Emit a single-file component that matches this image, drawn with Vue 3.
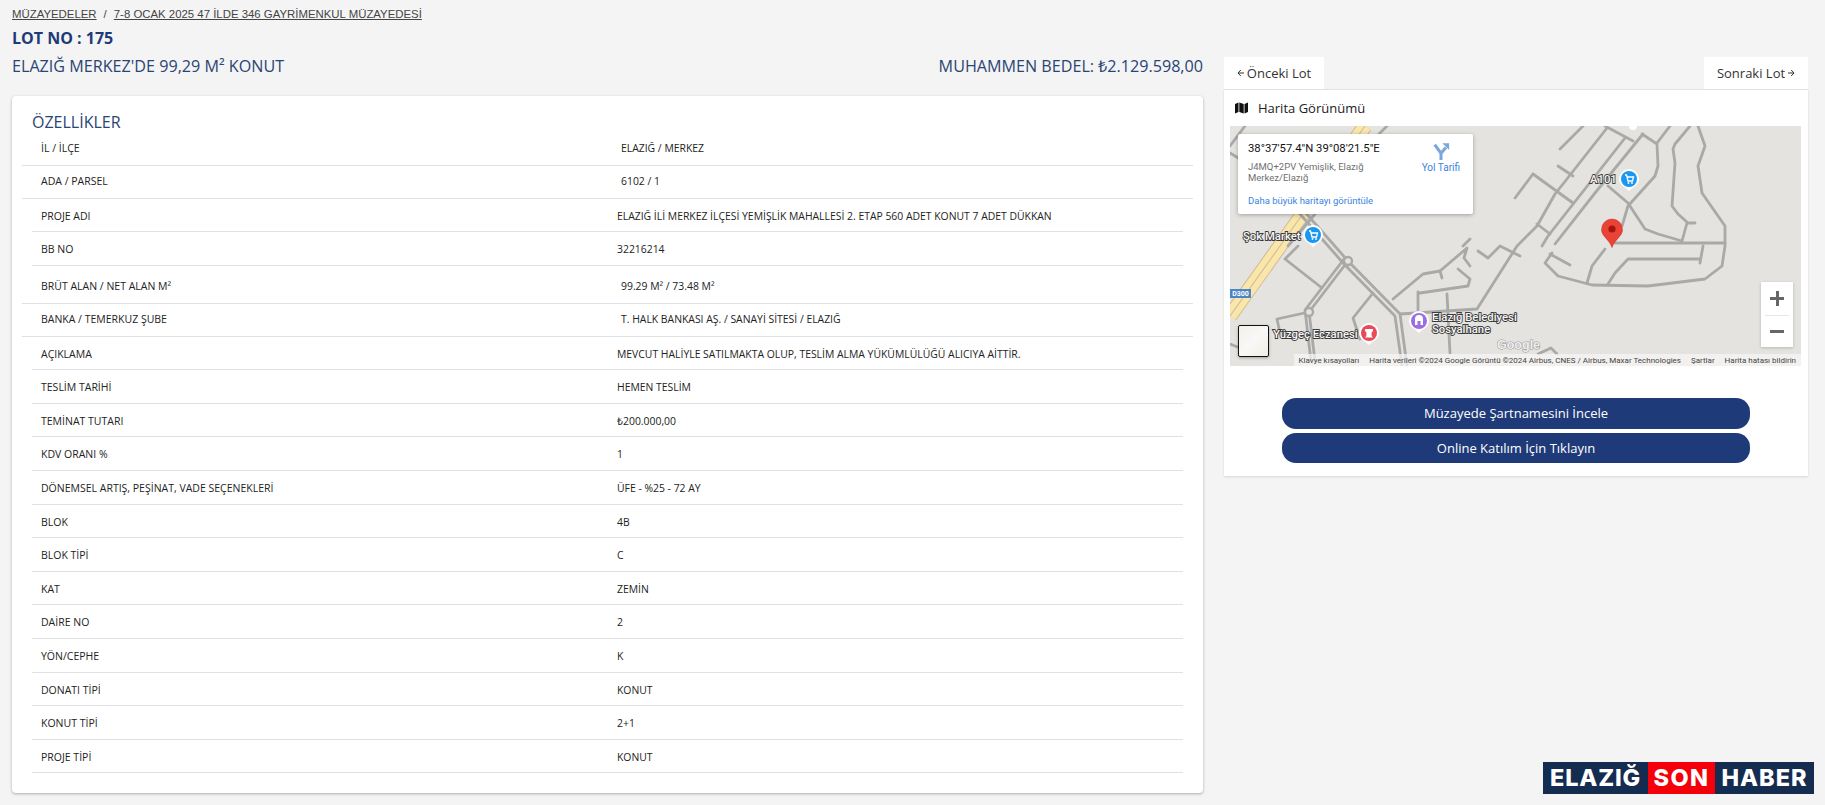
<script setup>
const rows = [
  { k: 'İL / İLÇE', v: 'ELAZIĞ / MERKEZ', h: 33, wide: true },
  { k: 'ADA / PARSEL', v: '6102 / 1', h: 33, wide: true },
  { k: 'PROJE ADI', v: 'ELAZIĞ İLİ MERKEZ İLÇESİ YEMİŞLİK MAHALLESİ 2. ETAP 560 ADET KONUT 7 ADET DÜKKAN', h: 33 },
  { k: 'BB NO', v: '32216214', h: 34 },
  { k: 'BRÜT ALAN / NET ALAN M²', v: '99.29 M² / 73.48 M²', h: 38, wide: true, low: true },
  { k: 'BANKA / TEMERKUZ ŞUBE', v: 'T. HALK BANKASI AŞ. / SANAYİ SİTESİ / ELAZIĞ', h: 33, wide: true },
  { k: 'AÇIKLAMA', v: 'MEVCUT HALİYLE SATILMAKTA OLUP, TESLİM ALMA YÜKÜMLÜLÜĞÜ ALICIYA AİTTİR.', h: 33 },
  { k: 'TESLİM TARİHİ', v: 'HEMEN TESLİM', h: 34 },
  { k: 'TEMİNAT TUTARI', v: '₺200.000,00', h: 33 },
  { k: 'KDV ORANI %', v: '1', h: 34 },
  { k: 'DÖNEMSEL ARTIŞ, PEŞİNAT, VADE SEÇENEKLERİ', v: 'ÜFE - %25 - 72 AY', h: 34 },
  { k: 'BLOK', v: '4B', h: 33 },
  { k: 'BLOK TİPİ', v: 'C', h: 34 },
  { k: 'KAT', v: 'ZEMİN', h: 33 },
  { k: 'DAİRE NO', v: '2', h: 34 },
  { k: 'YÖN/CEPHE', v: 'K', h: 34 },
  { k: 'DONATI TİPİ', v: 'KONUT', h: 33 },
  { k: 'KONUT TİPİ', v: '2+1', h: 34 },
  { k: 'PROJE TİPİ', v: 'KONUT', h: 33 }
]

const roads = [
  '15,0 0,20', '0,27 10,33', '147,10 157,0', '240,113 233,120',
  '330,23 353,0', '377,2 333,58 325,68 307,100 287,120 247,183 170,188',
  '395,12 318,110 312,120', '413,8 365,67 325,118', '328,40 343,50', '303,48 343,77', '303,48 285,72',
  '307,98 320,108', '375,0 403,15', '412,8 427,18 428,40 425,50 398,80 392,100', '440,0 427,17',
  '460,0 445,18 443,23 445,37 442,80 448,88 458,97 465,97',
  '468,0 475,20 468,40 472,67 495,100 495,120 492,140 475,153 418,160 362,159 328,150 315,137 322,127',
  '378,60 398,77 415,103 428,108 452,115', '385,117 495,117', '457,97 452,115',
  '375,123 362,140 357,157', '470,133 398,133 385,147 378,158', '473,120 470,137', '320,128 340,139',
  '74,85 118,135 170,188 177,240', '70,88 114,138 165,190 172,240',
  '118,135 79,186 85,235', '114,133 75,184 81,235',
  '68,120 55,133 92,162', '79,186 47,193 50,207', '0,218 10,222',
  '143,167 123,192 130,213', '163,173 193,148 210,145 212,152', '210,145 237,122 234,132 240,140',
  '228,143 240,153 238,160 190,167', '188,166 188,185', '217,168 220,227',
  '248,125 258,132 270,120 290,130', '308,228 321,222 327,228', '85,88 58,120'
]
</script>

<template>
  <div class="page">
    <div class="left">
      <div class="crumbs">
        <a class="crumb">MÜZAYEDELER</a>
        <span class="sep">/</span>
        <a class="crumb">7-8 OCAK 2025 47 İLDE 346 GAYRİMENKUL MÜZAYEDESİ</a>
      </div>
      <div class="lot">LOT NO : 175</div>
      <div class="titlebar">
        <span>ELAZIĞ MERKEZ'DE 99,29 M² KONUT</span>
        <span>MUHAMMEN BEDEL: ₺2.129.598,00</span>
      </div>
      <section class="card">
        <h2 class="card-title">ÖZELLİKLER</h2>
        <div
          v-for="r in rows"
          :key="r.k"
          class="row"
          :class="{ wide: r.wide, low: r.low }"
          :style="{ height: r.h + 'px' }"
        >
          <span class="row-key">{{ r.k }}</span>
          <span>{{ r.v }}</span>
        </div>
      </section>
    </div>

    <aside class="right">
      <div class="nav">
        <a class="nav-btn">
          <svg class="arrow" viewBox="0 0 7 8" aria-hidden="true"><path d="M7 4H1M3.800 1 1 4l2.800 3" /></svg>
          <span>Önceki Lot</span>
        </a>
        <a class="nav-btn next">
          <span>Sonraki Lot</span>
          <svg class="arrow" viewBox="0 0 7 8" aria-hidden="true"><path d="M0 4h6M3.200 1 6 4 3.200 7" /></svg>
        </a>
      </div>
      <div class="side-card">
        <div class="map-head">
          <svg class="map-icon" viewBox="0 0 13 12" aria-hidden="true">
            <path fill="#111" d="M0 2 3.500.5V10L0 11.500zM4.300.5 8.700 2v9.500L4.300 10zM9.500 2 13 .5V10l-3.500 1.500z" />
          </svg>
          <span>Harita Görünümü</span>
        </div>
        <div class="map">
          <svg class="map-svg" viewBox="0 0 571 240" width="571" height="240">
            <rect width="571" height="240" fill="#e5e3df" />
            <g fill="none" stroke-linejoin="round">
              <polyline points="135,0 50,120 0,190" stroke="#cbbd92" stroke-width="15" />
              <polyline points="135,0 50,120 0,190" stroke="#fae6ab" stroke-width="13" />
              <polyline points="135,0 50,120 0,190" stroke="#cfc298" stroke-width="1.2" />
              <polyline v-for="p in roads" :key="p" :points="p" stroke="#a9a9a7" stroke-width="2.8" stroke-linecap="round" />
            </g>
            <circle cx="118" cy="135" r="4" fill="#e5e3df" stroke="#a9a9a7" stroke-width="2.4" />
            <circle cx="79" cy="186" r="4" fill="#e5e3df" stroke="#a9a9a7" stroke-width="2.4" />
            <circle cx="403" cy="0" r="4" fill="#fff" />

            <rect x="0" y="163" width="21" height="9" fill="#4a86c8" />
            <text x="10.5" y="170" class="shield">D300</text>

            <text x="13" y="114" class="label">Şok Market</text>
            <text x="360" y="57" class="label">A101</text>
            <text x="43" y="212" class="label">Yüzgeç Eczanesi</text>
            <text x="202" y="195" class="label">Elazığ Belediyesi</text>
            <text x="202" y="207" class="label">Sosyalhane</text>
            <text x="267" y="223" class="google">Google</text>

            <g>
              <path fill="#fff" d="M83 99a10 10 0 0 1 10 10c0 6-6 8-10 12-4-4-10-6-10-12a10 10 0 0 1 10-10z" />
              <circle cx="83" cy="109" r="8" fill="#1a98f0" />
              <path fill="none" stroke="#fff" stroke-width="1.3" d="M79 105h1.500l1.500 6h4.500l1-4h-6" />
              <circle cx="82.500" cy="113" r=".9" fill="#fff" />
              <circle cx="86" cy="113" r=".9" fill="#fff" />
            </g>
            <g>
              <path fill="#fff" d="M399 43a10 10 0 0 1 10 10c0 6-6 8-10 12-4-4-10-6-10-12a10 10 0 0 1 10-10z" />
              <circle cx="399" cy="53" r="8" fill="#1a98f0" />
              <path fill="none" stroke="#fff" stroke-width="1.3" d="M395 49h1.500l1.500 6h4.500l1-4h-6" />
              <circle cx="398.500" cy="57" r=".9" fill="#fff" />
              <circle cx="402" cy="57" r=".9" fill="#fff" />
            </g>
            <g>
              <path fill="#fff" d="M139 197a10 10 0 0 1 10 10c0 6-6 8-10 12-4-4-10-6-10-12a10 10 0 0 1 10-10z" />
              <circle cx="139" cy="207" r="8" fill="#e84a5a" />
              <path fill="#fff" d="M135 203h8v2l-1.400 1.500v3.500l1.400 1.500h-8l1.400-1.500v-3.500L135 205z" />
            </g>
            <g>
              <path fill="#fff" d="M189 185a10 10 0 0 1 10 10c0 6-6 8-10 12-4-4-10-6-10-12a10 10 0 0 1 10-10z" />
              <circle cx="189" cy="195" r="8" fill="#9b6fe0" />
              <path fill="#fff" fill-rule="evenodd" d="M185 199v-6a4 4 0 0 1 8 0v6zM187.500 199h3v-4h-3z" />
            </g>

            <path fill="#ea4335" stroke="#c5281c" stroke-width=".5" d="M382 93a10.500 10.500 0 0 1 10.500 10.500c0 7-7.500 9.500-10.500 18-3-8.500-10.500-11-10.500-18A10.500 10.500 0 0 1 382 93z" />
            <circle cx="382" cy="103" r="3.600" fill="#a3150f" />
          </svg>

          <div class="info">
            <div class="info-main">
              <div class="coords">38°37'57.4"N 39°08'21.5"E</div>
              <div class="address">J4MQ+2PV Yemişlik, Elazığ Merkez/Elazığ</div>
              <a class="bigger">Daha büyük haritayı görüntüle</a>
            </div>
            <a class="dir">
              <svg class="dir-icon" viewBox="0 0 20 20" aria-hidden="true">
                <path fill="none" stroke="#7ba6dc" stroke-width="3.400" d="M10 20v-7.500L3 3M10 12.500 15.500 6" />
                <path fill="#7ba6dc" d="M11.500 1.500H19V9z" />
              </svg>
              <span>Yol Tarifi</span>
            </a>
          </div>

          <div class="layer"></div>

          <div class="zoom">
            <div class="zoom-btn"><span class="plus-h"></span><span class="plus-v"></span></div>
            <div class="zoom-btn"><span class="plus-h"></span></div>
          </div>

          <div class="attr">
            <span>Klavye kısayolları</span>
            <span>Harita verileri ©2024 Google Görüntü ©2024 Airbus, CNES / Airbus, Maxar Technologies</span>
            <span>Şartlar</span>
            <span>Harita hatası bildirin</span>
          </div>
        </div>
        <div class="actions">
          <a class="action">Müzayede Şartnamesini İncele</a>
          <a class="action second">Online Katılım İçin Tıklayın</a>
        </div>
      </div>
    </aside>

    <div class="logo">
      <span class="logo-a">ELAZIĞ</span>
      <span class="logo-b">SON</span>
      <span class="logo-c">HABER</span>
    </div>
  </div>
</template>

<style>
html, body { margin: 0; background: #f4f4f4; }
</style>

<style scoped>
.page {
  position: relative;
  display: flex;
  gap: 21px;
  width: 1825px;
  height: 805px;
  overflow: hidden;
  background: #f4f4f4;
  padding-left: 12px;
  box-sizing: border-box;
  font-family: "Open Sans", sans-serif;
}
.left { width: 1191px; flex: none; }
.crumbs {
  height: 28px;
  display: flex;
  align-items: center;
  gap: 7px;
  font: 11.400px "Liberation Sans", sans-serif;
  color: #444;
}
.crumb { text-decoration: underline; }
.lot {
  height: 20px;
  line-height: 20px;
  font-size: 16px;
  font-weight: 700;
  color: #1f3a78;
}
.titlebar {
  margin-top: 4px;
  height: 28px;
  display: flex;
  align-items: center;
  justify-content: space-between;
  font-size: 16.150px;
  color: #2a4474;
}
.card {
  margin-top: 16px;
  height: 697px;
  box-sizing: border-box;
  padding: 16px 10px 0;
  background: #fff;
  border-radius: 4px;
  box-shadow: 0 1px 3px rgba(0, 0, 0, 0.3);
}
.card-title {
  margin: 0 0 0 10px;
  height: 21px;
  line-height: 20px;
  font-size: 16px;
  font-weight: 400;
  color: #2a4474;
}
.row {
  display: grid;
  grid-template-columns: 576px 1fr;
  align-items: center;
  box-sizing: border-box;
  margin: 0 10px;
  padding: 1px 0 0 9px;
  border-bottom: 1px solid #dee2e6;
  font-size: 10.400px;
  color: #222;
}
.row-key { font-size: 10.500px; }
.row.wide {
  grid-template-columns: 580px 1fr;
  margin: 0;
  padding: 0 0 2px 19px;
}
.row.low { padding: 3px 0 0 19px; }

.right { width: 584px; flex: none; padding-top: 57px; box-sizing: border-box; }
.nav { display: flex; justify-content: space-between; height: 32px; }
.nav-btn {
  display: flex;
  align-items: center;
  justify-content: center;
  gap: 3px;
  width: 100px;
  height: 32px;
  background: #fff;
  font-size: 13px;
  color: #333;
}
.nav-btn.next { width: 104px; }
.arrow {
  width: 7px;
  height: 8px;
  fill: none;
  stroke: #333;
  stroke-width: 1;
}
.side-card {
  height: 387px;
  box-sizing: border-box;
  background: #fff;
  border-top: 1px solid #e2e2e2;
  box-shadow: 0 1px 2px rgba(0, 0, 0, 0.12);
  padding: 0 6px;
}
.map-head {
  height: 36px;
  display: flex;
  align-items: center;
  gap: 10px;
  padding-left: 5px;
  font-size: 13px;
  color: #222;
}
.map-icon { width: 13px; height: 12px; }
.map {
  position: relative;
  width: 571px;
  height: 240px;
  overflow: hidden;
}
.map-svg { display: block; }
.label {
  font: 500 11.300px Roboto, sans-serif;
  fill: #f6f6f6;
  stroke: #3a3a3a;
  stroke-width: 1.800px;
  paint-order: stroke;
}
.shield { font: 700 7px Roboto, sans-serif; fill: #fff; text-anchor: middle; }
.google {
  font: 700 12.500px "Liberation Sans", sans-serif;
  fill: #eeeeee;
  stroke: #999;
  stroke-width: 1px;
  paint-order: stroke;
}
.info {
  position: absolute;
  left: 8px;
  top: 8px;
  width: 235px;
  height: 80px;
  box-sizing: border-box;
  display: flex;
  justify-content: space-between;
  padding: 8px 14px 0 10px;
  background: #fff;
  border-radius: 2px;
  box-shadow: 0 1px 4px rgba(0, 0, 0, 0.3);
  font-family: Roboto, sans-serif;
}
.info-main { width: 130px; }
.coords { font-size: 11.300px; color: #111; line-height: 14px; white-space: nowrap; }
.address { margin-top: 5px; font-size: 9.500px; line-height: 11px; color: #707070; }
.bigger { display: block; margin-top: 12px; font-size: 9.500px; line-height: 11px; color: #3a84df; white-space: nowrap; }
.dir {
  display: flex;
  flex-direction: column;
  align-items: center;
  margin-right: -1px;
  font-size: 10px;
  line-height: 11px;
  color: #3a84df;
}
.dir-icon { width: 18px; height: 18px; margin-bottom: 2px; }
.layer {
  position: absolute;
  left: 8px;
  top: 199px;
  width: 31px;
  height: 32px;
  box-sizing: border-box;
  border: 1px solid #111;
  border-radius: 2px;
  background: linear-gradient(135deg, #f5f1e6, #f8f8f8 50%, #f1eee2);
  box-shadow: 0 1px 3px rgba(0, 0, 0, 0.3);
}
.zoom {
  position: absolute;
  left: 531px;
  top: 156px;
  width: 32px;
  height: 65px;
  background: #fff;
  box-shadow: 0 1px 3px rgba(0, 0, 0, 0.2);
}
.zoom-btn { position: relative; height: 32.500px; }
.zoom-btn + .zoom-btn::before {
  content: "";
  position: absolute;
  left: 4px;
  right: 4px;
  top: 0;
  border-top: 1px solid #e6e6e6;
}
.plus-h, .plus-v { position: absolute; background: #666; }
.plus-h { left: 9px; top: 15px; width: 14px; height: 3px; }
.plus-v { left: 14.500px; top: 9px; width: 3px; height: 15px; }
.attr {
  position: absolute;
  right: 0;
  bottom: 0;
  height: 12px;
  display: flex;
  gap: 10px;
  padding: 0 5px;
  align-items: center;
  background: rgba(245, 245, 245, 0.75);
  font: 8px Roboto, sans-serif;
  color: #444;
  white-space: nowrap;
}
.actions {
  margin: 32px 52px 0;
  display: flex;
  flex-direction: column;
  gap: 4px;
}
.action {
  display: flex;
  align-items: center;
  justify-content: center;
  height: 31px;
  padding-bottom: 1px;
  box-sizing: border-box;
  border-radius: 14px;
  background: #1f3a78;
  color: #fff;
  font-size: 13px;
}
.action.second { height: 30px; }
.logo {
  position: absolute;
  left: 1543px;
  top: 762px;
  display: flex;
  height: 32px;
  font: 800 23.500px/32px Inter, sans-serif;
  letter-spacing: 0.4px;
  color: #fff;
  background: #142c4f;
}
.logo span { display: block; text-align: center; }
.logo-a { width: 105px; letter-spacing: 0.800px; }
.logo-b { width: 67px; background: #f5000a; letter-spacing: 1.500px; }
.logo-c { width: 99px; letter-spacing: 1px; }
</style>
